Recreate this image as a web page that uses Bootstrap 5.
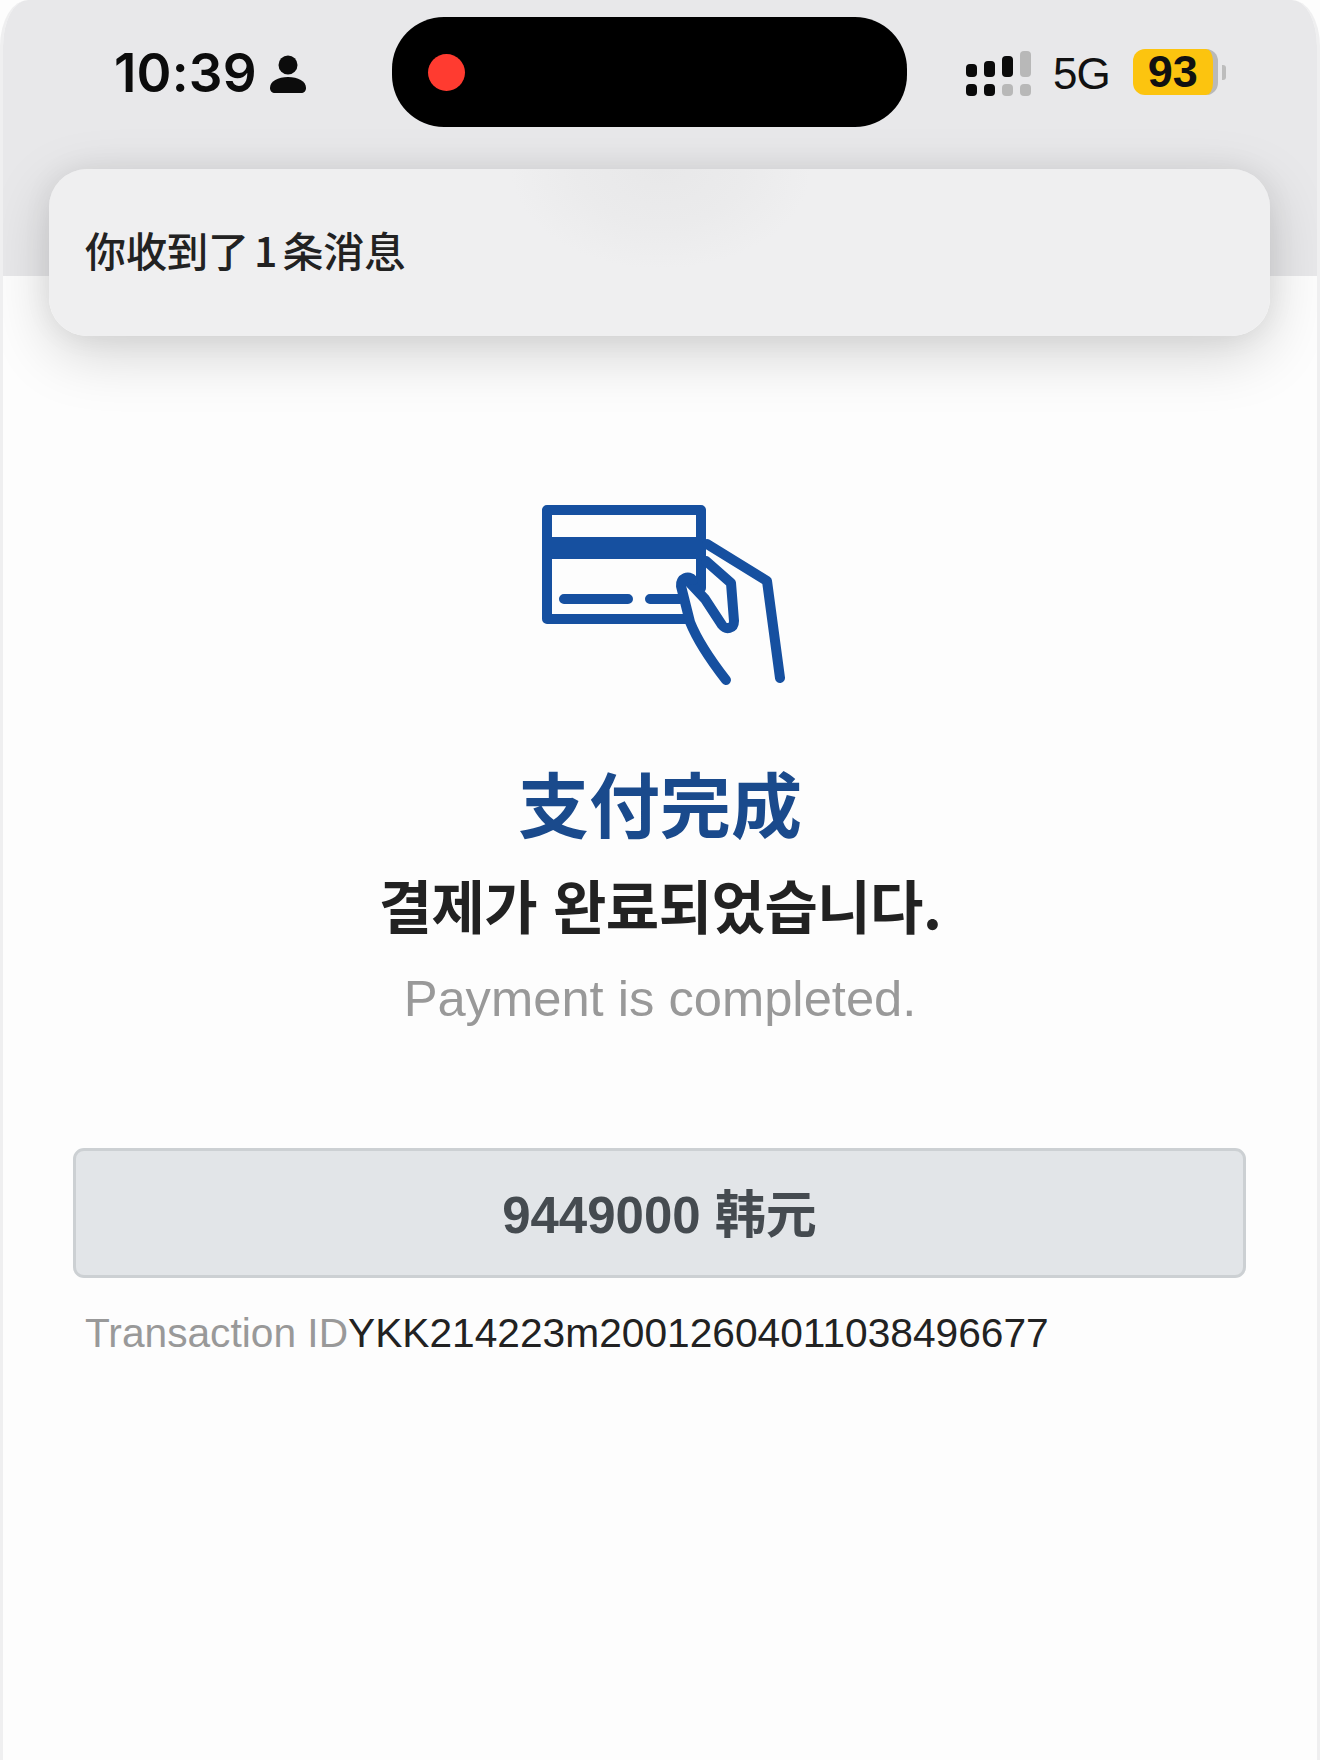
<!DOCTYPE html>
<html lang="ko">
<head>
    <meta charset="UTF-8">
    <meta name="viewport" content="width=device-width, initial-scale=1.0">
    <title>결제 완료</title>
    <link href="https://cdn.jsdelivr.net/npm/bootstrap@5.3.2/dist/css/bootstrap.min.css" rel="stylesheet">
    <style>
        body { background: #fdfdfd; font-family: "Liberation Sans", "Noto Sans CJK KR", sans-serif; }
        .phone-frame { width: 1320px; height: 1760px; border-left: 3px solid #efeff0; border-right: 3px solid #efeff0; border-top-left-radius: 28px 46px; border-top-right-radius: 28px 46px; overflow: hidden; position: relative; background: #fdfdfd; }
        .status-zone { height: 276px; background: #e8e8ea; padding-top: 17px; }
        .status-left { width: 389px; padding-left: 111px; height: 110px; }
        .clock-text { font-family: Inter, sans-serif; font-weight: 600; font-size: 53px; letter-spacing: .2px; color: #0c0c0c; line-height: 1; margin-top: 3px; }
        .person-icon { width: 36px; height: 38px; margin-left: 13px; margin-top: 3px; }
        .island { width: 515px; height: 110px; background: #000; border-radius: 52px; padding-left: 36px; }
        .island-dot { width: 37px; height: 37px; border-radius: 50%; background: #ff3b30; }
        .status-right { margin-left: 59px; height: 110px; }
        .signal-icon { width: 66px; height: 46px; margin-top: 3px; }
        .net-text { font-size: 44px; color: #111; margin-left: 21px; letter-spacing: -1px; line-height: 1; margin-top: 3px; }
        .battery-box { width: 85px; height: 46px; margin-left: 23px; background: #fcc40f; border-radius: 12px; border-right: 5px solid #b9b9b9; font-weight: 700; font-size: 45px; line-height: 46px; color: #111; text-align: center; }
        .battery-tip { width: 4px; height: 15px; margin-left: 4px; background: #bdbdbd; border-radius: 0 3px 3px 0; }
        .notice-panel { position: absolute; left: 46px; top: 169px; width: 1221px; height: 167px; border-radius: 38px; background: radial-gradient(ellipse 150px 100px at 612px 0, #e8e8e9, #ebebec 55%, #efeff0 100%); box-shadow: 0 18px 60px rgba(0,0,0,.17), 0 0 30px rgba(0,0,0,.06); padding: 0 0 6px 36px; font-family: "Noto Sans CJK SC", sans-serif; font-weight: 500; font-size: 41px; color: #222; }
        .notice-panel span { margin-left: 5px; margin-right: 5px; }
        .pay-main { padding-top: 205px; }
        .pay-icon { width: 320px; height: 220px; display: block; }
        .pay-title { font-family: "Noto Sans CJK SC", sans-serif; font-weight: 700; font-size: 71px; line-height: 84px; color: #1a4a8c; margin-top: 58px; }
        .pay-title-ko { font-family: "Noto Sans CJK KR", sans-serif; font-weight: 700; font-size: 58px; line-height: 70px; color: #222; margin-top: 26px; letter-spacing: -.5px; }
        .pay-title-en { font-size: 50.7px; line-height: 60px; color: #999; margin-top: 30px; }
        .amount-box { margin: 119px 71px 0 70px; height: 130px; padding-top: 6px; background: #e2e5e8; border: 3px solid #ccd0d3; border-radius: 11px; font-family: "Liberation Sans", "Noto Sans CJK SC", sans-serif; font-weight: 700; font-size: 51px; color: #454b50; }
        .txn-line { margin: 30px 0 0 82px; font-size: 40.7px; line-height: 50px; color: #222; white-space: nowrap; }
        .txn-label { color: #999; }
    </style>
</head>
<body>
    <div class="phone-frame">
        <!-- status bar -->
        <div class="status-zone d-flex align-items-start">
            <div class="status-left d-flex align-items-center">
                <span class="clock-text">10:39</span>
                <svg class="person-icon" viewBox="0 0 36 38"><circle cx="18" cy="10" r="9.5" fill="#0c0c0c"/><path d="M0 33c0-7 8-11 18-11s18 4 18 11c0 3-2 5-5 5H5c-3 0-5-2-5-5z" fill="#0c0c0c"/></svg>
            </div>
            <div class="island d-flex align-items-center">
                <div class="island-dot"></div>
            </div>
            <div class="status-right d-flex align-items-center">
                <svg class="signal-icon" viewBox="0 0 66 46">
                    <rect x="0" y="13" width="11" height="13" rx="4" fill="#0a0a0a"/>
                    <rect x="18" y="10" width="11" height="16" rx="4" fill="#0a0a0a"/>
                    <rect x="36" y="5" width="11" height="21" rx="4" fill="#0a0a0a"/>
                    <rect x="54" y="0" width="11" height="26" rx="4" fill="#b8b8b8"/>
                    <rect x="0" y="33" width="11" height="12" rx="4" fill="#0a0a0a"/>
                    <rect x="18" y="33" width="11" height="12" rx="4" fill="#0a0a0a"/>
                    <rect x="36" y="33" width="11" height="12" rx="4" fill="#b8b8b8"/>
                    <rect x="54" y="33" width="11" height="12" rx="4" fill="#b8b8b8"/>
                </svg>
                <span class="net-text">5G</span>
                <div class="battery-box">93</div>
                <div class="battery-tip"></div>
            </div>
        </div>

        <!-- notification -->
        <div class="notice-panel d-flex align-items-center">你收到了<span>1</span>条消息</div>

        <!-- content -->
        <div class="pay-main">
            <div class="d-flex justify-content-center">
                <svg class="pay-icon" viewBox="0 0 320 220" fill="none" stroke="#1650a0" stroke-width="10" stroke-linecap="round" stroke-linejoin="round">
                    <path d="M187 138H47V29h154v78"/>
                    <rect x="46" y="56" width="159" height="22" fill="#1650a0" stroke="none"/>
                    <path d="M64 118h64M150 118h30"/>
                    <path d="M207 63l60 37 13 97"/>
                    <path d="M206 80l25 22 3 38c0 8-8 9-12 4l-17-26-15-16"/>
                    <path d="M226 199c-14-18-28-38-36-58l-9-36c-1-8 8-11 12-6"/>
                </svg>
            </div>
            <div class="text-center pay-title">支付完成</div>
            <div class="text-center pay-title-ko">결제가 완료되었습니다.</div>
            <div class="text-center pay-title-en">Payment is completed.</div>
            <div class="amount-box d-flex align-items-center justify-content-center">9449000 韩元</div>
            <div class="txn-line"><span class="txn-label">Transaction ID</span>YKK214223m20012604011038496677</div>
        </div>
    </div>
    <script src="https://cdn.jsdelivr.net/npm/bootstrap@5.3.2/dist/js/bootstrap.bundle.min.js"></script>
</body>
</html>
